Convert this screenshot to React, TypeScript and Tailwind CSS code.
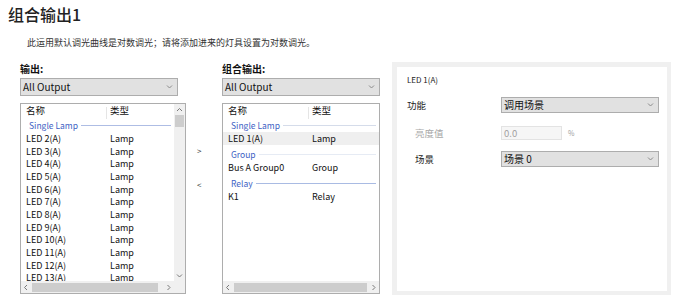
import React from 'react';

type Dir = 'up' | 'down' | 'left' | 'right';

function Arrow({ dir, color = '#606060' }: { dir: Dir; color?: string }) {
  const paths: Record<Dir, string> = {
    up: 'M1 4 L3.5 1.5 L6 4',
    down: 'M1 1.5 L3.5 4 L6 1.5',
    left: 'M4 1 L1.5 3.5 L4 6',
    right: 'M1.5 1 L4 3.5 L1.5 6',
  };
  const vertical = dir === 'up' || dir === 'down';
  return (
    <svg
      width={vertical ? 7 : 6}
      height={vertical ? 6 : 7}
      viewBox={vertical ? '0 0 7 6' : '0 0 6 7'}
    >
      <path d={paths[dir]} stroke={color} strokeWidth="1" fill="none" />
    </svg>
  );
}

function Select({ value, className }: { value: string; className: string }) {
  return (
    <div
      className={`flex items-center justify-between border border-[#adadad] bg-[#e1e1e1] pl-[2px] pr-[4px] text-[10px] text-[#111] ${className}`}
    >
      <span className="leading-none whitespace-nowrap">{value}</span>
      <Arrow dir="down" color="#8c8c8c" />
    </div>
  );
}

function GroupRow({
  label,
  lineClass,
  spaced,
}: {
  label: string;
  lineClass: string;
  spaced?: boolean;
}) {
  return (
    <div className={`flex items-center h-[14px] pl-[8px] pr-[3px] ${spaced ? 'mt-[2.5px]' : ''}`}>
      <span className="text-[8.5px] leading-none text-[#3d5fc4] whitespace-nowrap">{label}</span>
      <div className={`flex-1 h-px ml-[3px] ${lineClass}`} />
    </div>
  );
}

function ItemRow({ name, type, selected }: { name: string; type: string; selected?: boolean }) {
  return (
    <div
      className={`flex items-center h-[12.7px] text-[9px] leading-none text-[#111] ${selected ? 'bg-[#efefef]' : ''}`}
    >
      <span className="w-[89px] shrink-0 pl-[5px] whitespace-nowrap">{name}</span>
      <span className="whitespace-nowrap">{type}</span>
    </div>
  );
}

function HeaderRow() {
  return (
    <div className="flex items-center h-[14px] text-[9.5px] leading-none text-[#111]">
      <span className="w-[85px] shrink-0 pl-[5px]">名称</span>
      <div className="w-px h-[12px] mt-[3px] bg-[#e5e5e5]" />
      <span className="pl-[3px]">类型</span>
    </div>
  );
}

function HScroll({ thumbClass }: { thumbClass: string }) {
  return (
    <div className="flex flex-1 h-[12px] items-center bg-[#f0f0f0]">
      <div className="w-[10px] flex justify-center">
        <Arrow dir="left" color="#7a7a7a" />
      </div>
      <div className={`h-[9px] ml-[1px] bg-[#cdcdcd] ${thumbClass}`} />
      <div className="flex-1" />
      <div className="w-[10px] flex justify-center">
        <Arrow dir="right" color="#7a7a7a" />
      </div>
    </div>
  );
}

function VScroll() {
  return (
    <div className="w-[11px] flex flex-col items-center bg-[#f0f0f0]">
      <div className="h-[11px] flex items-center">
        <Arrow dir="up" color="#7a7a7a" />
      </div>
      <div className="w-[9px] h-[12px] bg-[#cdcdcd]" />
      <div className="flex-1" />
      <div className="h-[10px] flex items-center">
        <Arrow dir="down" color="#7a7a7a" />
      </div>
    </div>
  );
}

// LED 2(A) .. LED 13(A); the last row is cut by the scrollbar, as in the dialog
const leftItems = Array.from({ length: 12 }, (_, i) => `LED ${i + 2}(A)`);

export default function App() {
  return (
    <div className="w-[680px] h-[301px] overflow-hidden bg-white text-[#111] font-['Noto_Sans_CJK_SC','Noto_Sans',sans-serif]">
      <div className="pt-[3px] pl-[8px] text-[16px] leading-[22px] font-medium text-[#222]">组合输出1</div>
      <div className="mt-[11px] pl-[27px] text-[9px] leading-[13px] text-[#333]">
        此运用默认调光曲线是对数调光；请将添加进来的灯具设置为对数调光。
      </div>

      <div className="mt-[13px] flex pl-[20px]">
        {/* Output list */}
        <div className="w-[166px] flex flex-col">
          <div className="h-[14px] text-[10px] leading-[14px] font-bold text-[#111]">输出:</div>
          <Select value="All Output" className="mt-[2px] w-[158px] h-[18px]" />
          <div className="mt-[7px] w-[166px] h-[191px] border border-[#adadad] flex flex-col">
            <div className="flex flex-1 min-h-0">
              <div className="flex-1 overflow-hidden">
                <HeaderRow />
                <GroupRow label="Single Lamp" lineClass="bg-[#aebde4]" />
                {leftItems.map((n) => (
                  <ItemRow key={n} name={n} type="Lamp" />
                ))}
              </div>
              <VScroll />
            </div>
            <div className="flex h-[12px]">
              <HScroll thumbClass="w-[126px]" />
              <div className="w-[11px] bg-[#f0f0f0]" />
            </div>
          </div>
        </div>

        {/* Move buttons */}
        <div className="w-[36px] flex flex-col items-start pl-[11px] pt-[83px] text-[8px] leading-[12px] text-[#333]">
          <span>&gt;</span>
          <span className="mt-[22px]">&lt;</span>
        </div>

        {/* Group output list */}
        <div className="w-[158px] flex flex-col">
          <div className="h-[14px] text-[10px] leading-[14px] font-bold text-[#111]">组合输出:</div>
          <Select value="All Output" className="mt-[2px] w-[158px] h-[18px]" />
          <div className="mt-[7px] w-[158px] h-[191px] border border-[#adadad] flex flex-col">
            <div className="flex-1 min-h-0 overflow-hidden">
              <HeaderRow />
              <GroupRow label="Single Lamp" lineClass="bg-[#d5dcea]" />
              <ItemRow name="LED 1(A)" type="Lamp" selected />
              <GroupRow label="Group" lineClass="bg-[#e6ebf4]" spaced />
              <ItemRow name="Bus A Group0" type="Group" />
              <GroupRow label="Relay" lineClass="bg-[#a9bbe3]" spaced />
              <ItemRow name="K1" type="Relay" />
            </div>
            <div className="flex h-[12px]">
              <HScroll thumbClass="w-[133px]" />
            </div>
          </div>
        </div>

        {/* Properties panel */}
        <div className="ml-[12px] w-[279px] h-[233px] border-l-[5px] border-t-[5px] border-r-4 border-b-4 border-[#f0f0f0] bg-white pl-[10px] pt-[7px]">
          <div className="text-[8px] leading-[12px] text-[#222]">LED 1(A)</div>
          <div className="mt-[11px] flex items-center h-[16px]">
            <span className="w-[94px] shrink-0 text-[9.5px] text-[#222]">功能</span>
            <Select value="调用场景" className="w-[158px] h-[16px]" />
          </div>
          <div className="mt-[13px] flex items-center h-[14px]">
            <span className="w-[94px] shrink-0 pl-[8px] text-[9.5px] text-[#a8a8a8]">亮度值</span>
            <div className="w-[61px] h-[14px] flex items-center border border-[#e3e3e3] bg-[#f6f6f6] pl-[2px] text-[9.5px] text-[#a0a0a0]">
              0.0
            </div>
            <span className="ml-[6px] text-[7px] text-[#a0a0a0]">%</span>
          </div>
          <div className="mt-[11px] flex items-center h-[16px]">
            <span className="w-[94px] shrink-0 pl-[8px] text-[9.5px] text-[#222]">场景</span>
            <Select value="场景 0" className="w-[158px] h-[16px]" />
          </div>
        </div>
      </div>
    </div>
  );
}
